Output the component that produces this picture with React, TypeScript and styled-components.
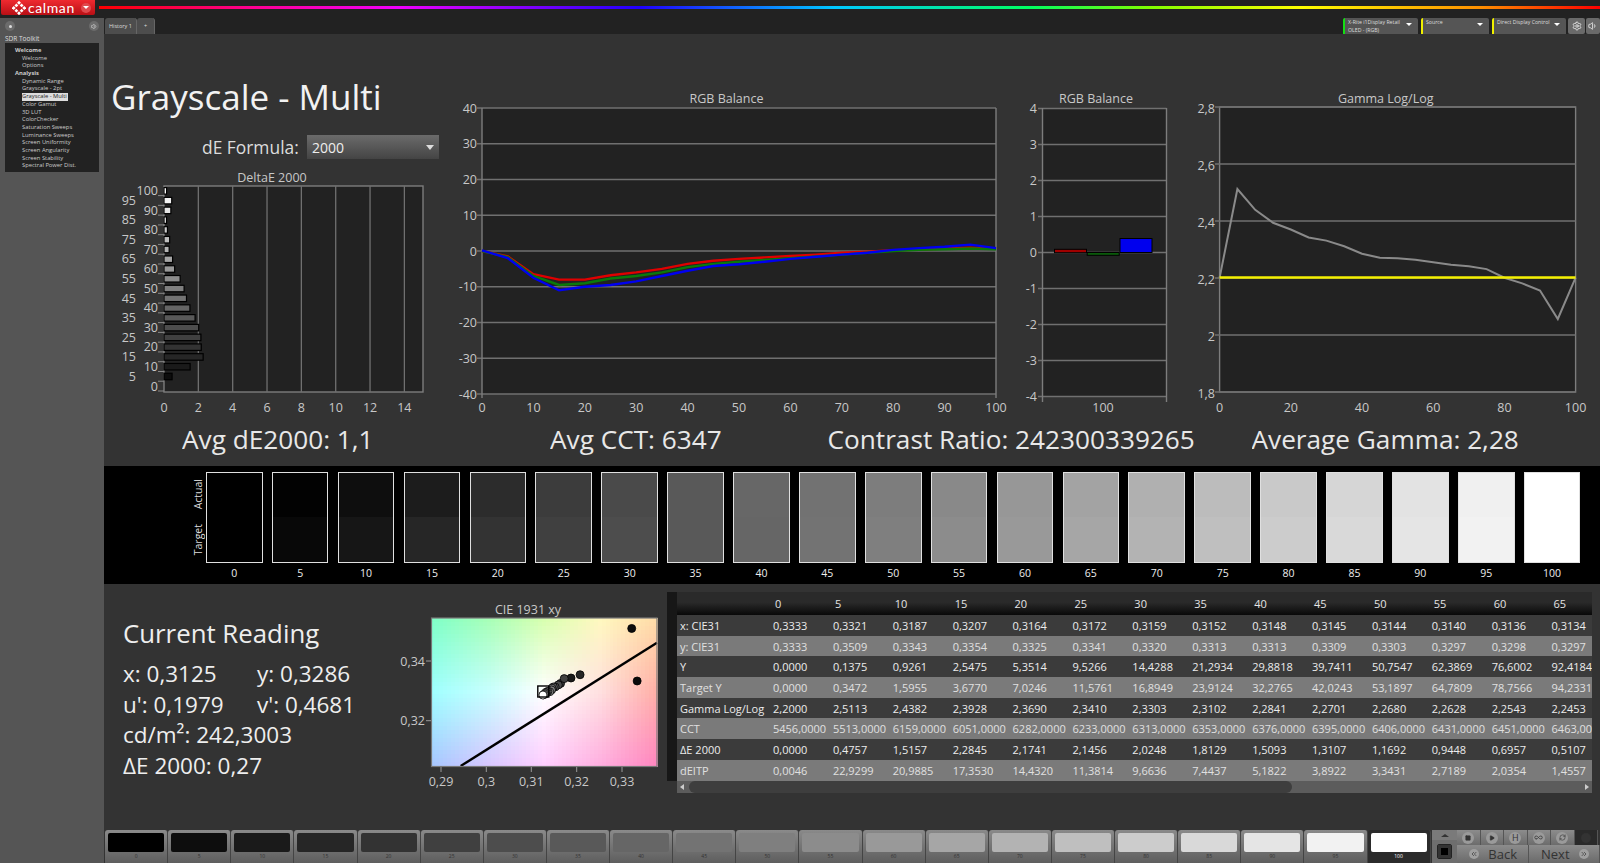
import { ReactNode } from 'react';
import styled, { createGlobalStyle } from 'styled-components';
import { ChevronsLeft, ChevronsRight, Infinity as InfinityIcon, Play, RefreshCw, Settings, Square, Volume1 } from 'lucide-react';

const FONT = '"Open Sans", "Noto Sans", sans-serif';

const GlobalStyle = createGlobalStyle`
  html, body {
    margin: 0;
    padding: 0;
    background: #333;
    font-family: ${FONT};
  }
`;

const Page = styled.div`
  width: 1600px;
  height: 863px;
  overflow: hidden;
  display: flex;
  flex-direction: column;
  background: #333;
  color: #eee;
`;

/* top strip */
const TopBar = styled.header`
  height: 18px;
  display: flex;
  background: #222;
`;

const LogoButton = styled.div`
  width: 94px;
  height: 15px;
  margin-left: 1px;
  display: flex;
  align-items: center;
  gap: 2px;
  padding: 0 4px 0 11px;
  box-sizing: border-box;
  border-radius: 0 0 2px 2px;
  background: linear-gradient(#ee2a30, #b90f15);
`;

const LogoText = styled.span`
  font-family: Lato, ${FONT};
  font-size: 14px;
  line-height: 15px;
  letter-spacing: 0.6px;
  color: #fff;
  margin-right: auto;
`;

const Caret = styled.i<{ $bg?: string; $size?: number }>`
  width: ${(p) => p.$size || 11}px;
  height: ${(p) => p.$size || 11}px;
  flex: none;
  display: flex;
  align-items: center;
  justify-content: center;
  border-radius: 50%;
  background: ${(p) => p.$bg || '#555'};

  &::after {
    content: '';
    border-top: 3px solid #fff;
    border-left: 3px solid transparent;
    border-right: 3px solid transparent;
  }
`;

const Rainbow = styled.div`
  flex: 1;
  height: 3px;
  margin: 6px 0 0 4px;
  background: linear-gradient(
    90deg,
    #ff0000 0%,
    #ff0090 10%,
    #f000ff 20%,
    #2000ff 36%,
    #00c8ff 49%,
    #00ff60 62%,
    #80ff00 70%,
    #ffff00 80%,
    #ff9000 92%,
    #ff0000 100%
  );
`;

const Body = styled.div`
  flex: 1;
  display: flex;
  min-height: 0;
`;

/* left panel */
const Sidebar = styled.aside`
  width: 104px;
  flex: none;
  padding: 0 5px;
  box-sizing: border-box;
  background: #555;
  color: #ddd;
`;

const SideTools = styled.div`
  height: 16px;
  display: flex;
  align-items: center;
  justify-content: space-between;
  padding: 0 0 0 0;
`;

const RoundButton = styled.span<{ $size?: number; $bg?: string }>`
  width: ${(p) => p.$size || 10}px;
  height: ${(p) => p.$size || 10}px;
  flex: none;
  display: flex;
  align-items: center;
  justify-content: center;
  border-radius: 50%;
  color: #ddd;
  background: ${(p) => p.$bg || '#6c6c6c'};
`;

const ToolDot = styled.i`
  width: 3px;
  height: 3px;
  border-radius: 50%;
  background: #ddd;
`;

const SideTitle = styled.div`
  font-size: 6.5px;
  line-height: 9px;
`;

const Tree = styled.ul`
  list-style: none;
  margin: 0;
  padding: 4px 0 0 10px;
  width: 94px;
  height: 129px;
  box-sizing: border-box;
  background: #222;
`;

const TreeItem = styled.li<{ $bold?: boolean; $active?: boolean }>`
  height: 7.7px;
  line-height: 7.7px;
  width: fit-content;
  font-size: 5.8px;
  white-space: nowrap;
  margin-left: ${(p) => (p.$bold ? 0 : 7)}px;
  font-weight: ${(p) => (p.$bold ? 700 : 400)};
  color: ${(p) => (p.$active ? '#222' : '#ccc')};
  background: ${(p) => (p.$active ? '#ddd' : 'none')};
  padding-right: ${(p) => (p.$active ? 1 : 0)}px;
`;

/* main area */
const Content = styled.main`
  flex: 1;
  min-width: 0;
  display: flex;
  flex-direction: column;
`;

const TabBar = styled.div`
  height: 16px;
  display: flex;
  background: #222;
`;

const Tab = styled.div<{ $wide?: boolean }>`
  width: ${(p) => (p.$wide ? 31 : 17)}px;
  margin-left: ${(p) => (p.$wide ? 1 : 0)}px;
  display: flex;
  align-items: center;
  justify-content: center;
  font-size: 5.5px;
  color: #ddd;
  background: #4d4d4d;
  border-radius: 3px 3px 0 0;
  border-right: 1px solid #666;
`;

const DeviceChips = styled.div`
  margin-left: auto;
  display: flex;
  gap: 3px;
`;

const Chip = styled.div<{ $width: number; $color: string }>`
  width: ${(p) => p.$width}px;
  display: flex;
  justify-content: space-between;
  padding: 1px 4px 0 3px;
  box-sizing: border-box;
  background: #555;
  border-left: 2px solid ${(p) => p.$color};
  border-radius: 2px 2px 0 0;
  font-size: 5.2px;
  line-height: 7.5px;
  color: #ddd;
`;

const ChipIcons = styled.div`
  margin-left: -1px;
  display: flex;
  gap: 1px;
`;

const ChipIcon = styled.div<{ $width: number }>`
  width: ${(p) => p.$width}px;
  display: flex;
  align-items: center;
  justify-content: center;
  background: #6a6a6a;
  border-radius: 2px;
  color: #eee;
`;

const ChartRow = styled.section`
  height: 386px;
  display: flex;
  align-items: flex-start;
`;

const LeftColumn = styled.div`
  width: 340px;
  flex: none;
`;

const PlotGroup = styled.div`
  padding-top: 56px;
  display: flex;
`;

const PageTitle = styled.h1`
  margin: 0;
  padding: 39px 0 0 7px;
  font-size: 35px;
  line-height: 48px;
  font-weight: 400;
  color: #f2f2f2;
`;

const FormulaRow = styled.div`
  display: flex;
  align-items: center;
  justify-content: space-between;
  width: 237px;
  margin: 14px 0 1px 98px;
  height: 24px;
  font-size: 17.4px;
  color: #ddd;
`;

const FormulaSelect = styled.div`
  width: 132px;
  height: 24px;
  display: flex;
  align-items: center;
  justify-content: space-between;
  padding: 0 5px;
  box-sizing: border-box;
  background: linear-gradient(#6b6b6b, #444);
  font-size: 14px;
  color: #eee;

  &::after {
    content: '';
    border-top: 5px solid #ddd;
    border-left: 4px solid transparent;
    border-right: 4px solid transparent;
  }
`;

const ChartSvg = styled.svg<{ $top?: number }>`
  display: block;
  flex: none;
  margin-top: ${(p) => p.$top || 0}px;
  font-family: ${FONT};

  text {
    fill: #c8c8c8;
    font-size: 12.5px;
  }
`;

const StatsRow = styled.section`
  height: 46px;
  padding-bottom: 8px;
  box-sizing: border-box;
  display: flex;
  align-items: center;
  font-size: 26.2px;
  color: #e8e8e8;
`;

const Stat = styled.div<{ $left: number; $width: number }>`
  margin-left: ${(p) => p.$left}px;
  width: ${(p) => p.$width}px;
  overflow: hidden;
  white-space: nowrap;
  flex: none;
`;

/* swatch band */
const SwatchBand = styled.section`
  height: 118px;
  display: flex;
  align-items: flex-start;
  padding: 6px 0 0 88px;
  box-sizing: border-box;
  background: #000;
`;

const SideLabels = styled.div`
  width: 14px;
  height: 91px;
  display: flex;
  flex-direction: column;
  justify-content: space-around;
  align-items: flex-start;
`;

const VerticalLabel = styled.span`
  writing-mode: vertical-rl;
  transform: rotate(180deg);
  font-size: 10.5px;
  line-height: 12px;
  color: #ddd;
`;

const SwatchList = styled.div`
  display: flex;
  gap: 9.3px;
`;

const SwatchCell = styled.div`
  width: 56.6px;
  display: flex;
  flex-direction: column;
  align-items: center;
`;

const SwatchBox = styled.div<{ $actual: string; $target: string }>`
  width: 100%;
  height: 91px;
  box-sizing: border-box;
  border: 1.5px solid #e0e0e0;
  background: linear-gradient(${(p) => p.$actual} 50%, ${(p) => p.$target} 50%);
`;

const SwatchLabel = styled.span`
  margin-top: 3px;
  font-size: 10.5px;
  line-height: 14px;
  color: #eee;
`;

/* lower area */
const LowerRow = styled.section`
  height: 246px;
  display: flex;
  align-items: flex-start;
`;

const Reading = styled.div`
  width: 296px;
  flex: none;
  padding: 34px 0 0 19px;
  box-sizing: border-box;
  color: #eee;
`;

const ReadingTitle = styled.h2`
  margin: 0 0 10px;
  font-size: 25.8px;
  line-height: 31px;
  font-weight: 400;
`;

const ReadingLine = styled.div`
  display: flex;
  font-size: 22.5px;
  line-height: 30.6px;
`;

const ReadingCell = styled.span`
  width: 134px;
`;

const TableWrap = styled.div`
  width: 925px;
  margin-top: 8px;
  flex: none;
`;

const TableClip = styled.div`
  overflow: hidden;
  border-left: 10px solid #171717;
`;

const DataTable = styled.table`
  border-collapse: collapse;
  table-layout: fixed;
  width: 934.6px;
  font-size: 11px;
`;

const HeaderRow = styled.tr`
  height: 23px;
  background: linear-gradient(#2a2a2a 45%, #080808);
  color: #e4e4e4;
`;

const DataRow = styled.tr<{ $light: boolean }>`
  height: 20.7px;
  background: ${(p) => (p.$light ? '#7a7a7a' : '#3b3b3b')};
  color: ${(p) => (p.$light ? '#e0e0e0' : '#ececec')};
`;

const Cell = styled.td<{ $first?: boolean; $head?: boolean }>`
  width: ${(p) => (p.$first ? 96 : 59.9)}px;
  padding: 0 0 0 ${(p) => (p.$first ? 3 : p.$head ? 2 : 0)}px;
  box-sizing: border-box;
  white-space: nowrap;
  overflow: visible;
`;

const ScrollBar = styled.div`
  height: 12px;
  margin-left: 10px;
  display: flex;
  align-items: stretch;
  background: #5c5c5c;
`;

const ScrollArrow = styled.span<{ $right?: boolean }>`
  width: 10px;
  flex: none;
  display: flex;
  align-items: center;
  justify-content: center;
  background: #5c5c5c;
  margin-left: ${(p) => (p.$right ? 'auto' : 0)};

  &::after {
    content: '';
    border-top: 3px solid transparent;
    border-bottom: 3px solid transparent;
    ${(p) => (p.$right ? 'border-left: 4px solid #ccc;' : 'border-right: 4px solid #ccc;')}
  }
`;

const ScrollThumb = styled.span`
  width: 603px;
  margin-left: 2px;
  border-radius: 6px;
  background: #3e3e3e;
`;

/* bottom strip */
const BottomBar = styled.footer`
  height: 33px;
  display: flex;
  padding-left: 1px;
`;

const PatchList = styled.div`
  display: flex;
  width: 1326px;
  flex: none;
`;

const Patch = styled.div<{ $active: boolean }>`
  width: 63.14px;
  flex: none;
  box-sizing: border-box;
  padding: 2.5px 3px 0;
  border-right: 1px solid #444;
  border-radius: 3px 3px 0 0;
  background: ${(p) => (p.$active ? '#2b2b2b' : 'linear-gradient(#8a8a8a, #5e5e5e)')};
  color: ${(p) => (p.$active ? '#fff' : '#333')};
  text-align: center;
`;

const PatchColor = styled.div<{ $gray: number }>`
  height: 19px;
  border-radius: 2px;
  background: rgb(${(p) => p.$gray}, ${(p) => p.$gray}, ${(p) => p.$gray});
`;

const PatchLabel = styled.div`
  font-size: 5px;
  line-height: 9px;
`;

const StackColumn = styled.div`
  width: 25px;
  margin-left: 1px;
  flex: none;
  display: flex;
  flex-direction: column;
  background: #6e6e6e;
`;

const StackUp = styled.div`
  height: 10px;
  display: flex;
  align-items: center;
  justify-content: center;
  background: #7a7a7a;

  &::after {
    content: '';
    border-bottom: 3px solid #333;
    border-left: 4px solid transparent;
    border-right: 4px solid transparent;
  }
`;

const StackStop = styled.div`
  flex: 1;
  display: flex;
  align-items: center;
  justify-content: center;

  &::after {
    content: '';
    width: 7px;
    height: 7px;
    background: #000;
    border: 3px solid #333;
    outline: 1px solid #222;
    border-radius: 1px;
  }
`;

const ControlColumn = styled.div`
  flex: 1;
  display: flex;
  flex-direction: column;
`;

const ControlRow = styled.div`
  height: 16px;
  display: flex;
`;

const IconButton = styled.div<{ $dark?: boolean }>`
  width: 23.5px;
  flex: none;
  display: flex;
  align-items: center;
  justify-content: center;
  border-right: 1px solid #555;
  box-sizing: border-box;
  background: ${(p) => (p.$dark ? '#2a2a2a' : 'linear-gradient(#8c8c8c, #6c6c6c)')};
  color: #333;
`;

const LetterIcon = styled.span`
  font-size: 9px;
  line-height: 12px;
  color: #333;
`;

const NavRow = styled.div`
  flex: 1;
  display: flex;
`;

const NavButton = styled.div`
  flex: 1;
  display: flex;
  align-items: center;
  justify-content: space-around;
  padding: 0 6px 0 8px;
  background: linear-gradient(#8c8c8c, #6a6a6a);
  border-right: 1px solid #555;
  font-size: 13px;
  color: #333;
`;

interface AxisProps {
  x: number;
  y: number;
  anchor?: 'end' | 'middle' | 'start';
  children: ReactNode;
}

const Label = ({ x, y, anchor = 'middle', children }: AxisProps): JSX.Element => (
  <text x={x} y={y} textAnchor={anchor} dominantBaseline="central">
    {children}
  </text>
);

const STEPS = Array.from({ length: 21 }, (_, i) => i * 5);

// swatch greys, top half measured / bottom half target
const ACTUAL = [0, 2, 14, 28, 44, 60, 74, 89, 103, 114, 125, 137, 151, 163, 176, 188, 201, 214, 227, 240, 255];
const TARGET = STEPS.map((p) => Math.round(p * 2.55));
const SWATCH_TARGET = STEPS.map((p, i) => (p === 5 ? 8 : p === 10 ? 22 : TARGET[i]));

const DELTA = [0, 0.47, 1.52, 2.28, 2.17, 2.15, 2.02, 1.81, 1.51, 1.31, 1.17, 0.94, 0.62, 0.5, 0.3, 0.33, 0.2, 0.15, 0.4, 0.45, 0.15];

const RED = [0, -1.5, -6.5, -8, -8, -6.8, -6, -5, -3.6, -2.7, -2.2, -1.8, -1.4, -1, -0.5, -0.2, 0.2, 0.4, 0.7, 0.9, 0.6];
const GREEN = [0, -1.7, -7, -9.5, -9, -7.7, -7, -6, -4.5, -3.6, -3, -2.5, -2, -1.5, -1, -0.5, 0, 0.3, 0.5, 0.7, 0.5];
const BLUE = [0.2, -2, -7.5, -11, -10, -9.5, -8.5, -7, -5.5, -4.2, -3.7, -3, -2.2, -1.6, -1, -0.5, 0.3, 0.8, 1.2, 1.8, 0.8];

const GAMMA = [2.2, 2.5113, 2.4382, 2.3928, 2.369, 2.341, 2.3303, 2.3102, 2.2841, 2.2701, 2.268, 2.2628, 2.2543, 2.2453, 2.24, 2.23, 2.2, 2.18, 2.155, 2.055, 2.2];

const CIE_X = [0.3333, 0.3321, 0.3187, 0.3207, 0.3164, 0.3172, 0.3159, 0.3152, 0.3148, 0.3145, 0.3144, 0.314, 0.3136, 0.3134, 0.3132, 0.3131, 0.313, 0.3129, 0.3128, 0.3126, 0.3125];
const CIE_Y = [0.3333, 0.3509, 0.3343, 0.3354, 0.3325, 0.3341, 0.332, 0.3313, 0.3313, 0.3309, 0.3303, 0.3297, 0.3298, 0.3297, 0.3295, 0.3293, 0.3291, 0.329, 0.3288, 0.3287, 0.3286];

const polyline = (values: number[], toY: (v: number) => number, left: number, step: number): string =>
  values.map((v, i) => `${(left + i * step).toFixed(1)},${toY(v).toFixed(1)}`).join(' ');

function DeltaChart(): JSX.Element {
  const left = 164;
  const unit = 17.17;
  const rowY = (i: number) => 386 - i * 9.77;
  return (
    <ChartSvg width={340} height={262} viewBox="104 160 340 262">
      <Label x={272} y={177}>DeltaE 2000</Label>
      <rect x={left} y={186} width={259} height={206} fill="#222" stroke="#7d7d7d" strokeWidth={1.4} />
      {[2, 4, 6, 8, 10, 12, 14].map((v) => (
        <line key={v} x1={left + v * unit} x2={left + v * unit} y1={186} y2={392} stroke="#707070" strokeWidth={1.3} />
      ))}
      {STEPS.map((p, i) => (
        <g key={p}>
          <line x1={158} x2={164} y1={rowY(i) + 5} y2={rowY(i) + 5} stroke="#888" />
          {p % 10 === 0 ? (
            <Label x={158} y={rowY(i)} anchor="end">{p}</Label>
          ) : (
            <Label x={136} y={rowY(i)} anchor="end">{p}</Label>
          )}
          {DELTA[i] > 0 && (
            <rect
              x={left}
              y={rowY(i) - 3}
              width={DELTA[i] * unit}
              height={6.5}
              fill={`rgb(${TARGET[i]},${TARGET[i]},${TARGET[i]})`}
              stroke="#000"
              strokeWidth={1.2}
            />
          )}
        </g>
      ))}
      {[0, 2, 4, 6, 8, 10, 12, 14].map((v) => (
        <Label key={v} x={left + v * unit} y={407}>{v}</Label>
      ))}
    </ChartSvg>
  );
}

function BalanceChart(): JSX.Element {
  const toY = (v: number) => 251 - v * 3.575;
  return (
    <ChartSvg width={566} height={330} viewBox="444 90 566 330">
      <Label x={726.5} y={98}>RGB Balance</Label>
      <rect x={482} y={108} width={514} height={286} fill="#222" />
      {[40, 30, 20, 10, 0, -10, -20, -30, -40].map((v) => (
        <g key={v}>
          <line x1={477} x2={996} y1={toY(v)} y2={toY(v)} stroke="#707070" strokeWidth={1.3} />
          <Label x={477} y={toY(v)} anchor="end">{v}</Label>
        </g>
      ))}
      <line x1={482} x2={482} y1={108} y2={398} stroke="#7d7d7d" strokeWidth={1.4} />
      <line x1={996} x2={996} y1={108} y2={398} stroke="#7d7d7d" strokeWidth={1.4} />
      {[0, 10, 20, 30, 40, 50, 60, 70, 80, 90, 100].map((v) => (
        <Label key={v} x={482 + v * 5.14} y={407}>{v}</Label>
      ))}
      <polyline points={polyline(RED, toY, 482, 25.7)} fill="none" stroke="#e00000" strokeWidth={2.4} />
      <polyline points={polyline(GREEN, toY, 482, 25.7)} fill="none" stroke="#0a7a0a" strokeWidth={2.4} />
      <polyline points={polyline(BLUE, toY, 482, 25.7)} fill="none" stroke="#0000f0" strokeWidth={2.4} />
    </ChartSvg>
  );
}

function SmallBalanceChart(): JSX.Element {
  const rows = [4, 3, 2, 1, 0, -1, -2, -3, -4];
  const toY = (v: number) => 252.5 - v * 36;
  return (
    <ChartSvg width={180} height={330} viewBox="1010 90 180 330">
      <Label x={1096} y={98}>RGB Balance</Label>
      <rect x={1042.5} y={108} width={124} height={289} fill="#222" />
      {rows.map((v) => (
        <g key={v}>
          <line x1={1038} x2={1166.5} y1={toY(v)} y2={toY(v)} stroke="#707070" strokeWidth={1.3} />
          <Label x={1037} y={toY(v)} anchor="end">{v}</Label>
        </g>
      ))}
      <line x1={1042.5} x2={1042.5} y1={108} y2={402} stroke="#7d7d7d" strokeWidth={1.4} />
      <line x1={1166.5} x2={1166.5} y1={108} y2={402} stroke="#7d7d7d" strokeWidth={1.4} />
      <rect x={1054.5} y={249.3} width={32} height={3.4} fill="#a00000" stroke="#000" />
      <rect x={1087.2} y={252.5} width={32} height={2.8} fill="#0a5a0a" stroke="#000" />
      <rect x={1120} y={238.5} width={32} height={14} fill="#0000ee" stroke="#000" />
      <Label x={1103} y={407}>100</Label>
    </ChartSvg>
  );
}

function GammaChart(): JSX.Element {
  const toY = (v: number) => 391.7 - (v - 1.8) * 285;
  const labels = ['2,8', '2,6', '2,4', '2,2', '2', '1,8'];
  return (
    <ChartSvg width={410} height={330} viewBox="1190 90 410 330">
      <Label x={1385.7} y={98}>Gamma Log/Log</Label>
      <rect x={1219.6} y={107} width={356} height={285} fill="#222" stroke="#7d7d7d" strokeWidth={1.4} />
      {labels.map((text, i) => {
        const y = 107 + (i * 285) / 5;
        return (
          <g key={text}>
            <line x1={1215} x2={1575.6} y1={y} y2={y} stroke="#707070" strokeWidth={1.3} />
            <Label x={1215} y={y + 1} anchor="end">{text}</Label>
          </g>
        );
      })}
      {[0, 20, 40, 60, 80, 100].map((v) => (
        <Label key={v} x={1219.6 + v * 3.56} y={407}>{v}</Label>
      ))}
      <polyline points={polyline(GAMMA, toY, 1219.6, 17.8)} fill="none" stroke="#8a8a8a" strokeWidth={2} />
      <line x1={1219.6} x2={1575.6} y1={277.5} y2={277.5} stroke="#f4f000" strokeWidth={2.4} />
    </ChartSvg>
  );
}

const CIE_COLORS = [
  ['#80ffc8', '#a8ffb8', '#d8ffb0', '#fff8c0', '#ffdca8'],
  ['#a0ffff', '#c8ffff', '#ffffff', '#ffe0e0', '#ffb0a8'],
  ['#a8c8ff', '#d8c8ff', '#ffd0ff', '#ffb0e0', '#ff88c0'],
];

const hexToRgb = (hex: string): number[] => [1, 3, 5].map((i) => parseInt(hex.slice(i, i + 2), 16));

// bilinear blend over the control colours above
const cieColor = (u: number, v: number): string => {
  const cx = u * 4;
  const cy = v * 2;
  const ix = Math.min(Math.floor(cx), 3);
  const iy = Math.min(Math.floor(cy), 1);
  const fx = cx - ix;
  const fy = cy - iy;
  const a = hexToRgb(CIE_COLORS[iy][ix]);
  const b = hexToRgb(CIE_COLORS[iy][ix + 1]);
  const c = hexToRgb(CIE_COLORS[iy + 1][ix]);
  const d = hexToRgb(CIE_COLORS[iy + 1][ix + 1]);
  const mix = a.map((_, k) => Math.round(a[k] * (1 - fx) * (1 - fy) + b[k] * fx * (1 - fy) + c[k] * (1 - fx) * fy + d[k] * fx * fy));
  return `rgb(${mix.join(',')})`;
};

function CieChart(): JSX.Element {
  const left = 431.5;
  const top = 618;
  const cols = 57;
  const rows = 37;
  const cellW = 225.5 / cols;
  const cellH = 148.5 / rows;
  const px = (x: number) => 486.3 + (x - 0.3) * 4530;
  const py = (y: number) => 661 - (y - 0.34) * 2985;
  const cells = [];
  for (let r = 0; r < rows; r++) {
    for (let c = 0; c < cols; c++) {
      cells.push(
        <rect
          key={`${r}-${c}`}
          x={left + c * cellW}
          y={top + r * cellH}
          width={cellW + 0.6}
          height={cellH + 0.6}
          fill={cieColor(c / (cols - 1), r / (rows - 1))}
        />
      );
    }
  }
  return (
    <ChartSvg $top={6} width={267} height={210} viewBox="400 590 267 210">
      <Label x={528} y={609}>CIE 1931 xy</Label>
      <g shapeRendering="crispEdges">{cells}</g>
      <line x1={460.7} y1={766} x2={657} y2={642.7} stroke="#000" strokeWidth={2.4} />
      {STEPS.map((p, i) => (
        <circle
          key={p}
          cx={px(CIE_X[i])}
          cy={py(CIE_Y[i])}
          r={4}
          fill={`rgb(${Math.max(TARGET[i], 10)},${Math.max(TARGET[i], 10)},${Math.max(TARGET[i], 10)})`}
          stroke="#000"
          strokeWidth={0.8}
        />
      ))}
      <rect x={537.8} y={686} width={11} height={11} fill="none" stroke="#000" strokeWidth={1.4} />
      <rect x={left} y={top} width={225.5} height={148.5} fill="none" stroke="#777" strokeWidth={1.2} />
      {[
        ['0,29', 441],
        ['0,3', 486.3],
        ['0,31', 531.3],
        ['0,32', 576.7],
        ['0,33', 622],
      ].map(([text, x]) => (
        <g key={text}>
          <line x1={x} x2={x} y1={767} y2={772} stroke="#999" />
          <Label x={x as number} y={781}>{text}</Label>
        </g>
      ))}
      {[
        ['0,34', 661],
        ['0,32', 720.7],
      ].map(([text, y]) => (
        <g key={text}>
          <line x1={426} x2={431} y1={y} y2={y} stroke="#999" />
          <Label x={425} y={y as number} anchor="end">{text}</Label>
        </g>
      ))}
    </ChartSvg>
  );
}

const COLUMNS = [0, 5, 10, 15, 20, 25, 30, 35, 40, 45, 50, 55, 60, 65];

const ROWS: [string, string[]][] = [
  ['x: CIE31', ['0,3333', '0,3321', '0,3187', '0,3207', '0,3164', '0,3172', '0,3159', '0,3152', '0,3148', '0,3145', '0,3144', '0,3140', '0,3136', '0,3134']],
  ['y: CIE31', ['0,3333', '0,3509', '0,3343', '0,3354', '0,3325', '0,3341', '0,3320', '0,3313', '0,3313', '0,3309', '0,3303', '0,3297', '0,3298', '0,3297']],
  ['Y', ['0,0000', '0,1375', '0,9261', '2,5475', '5,3514', '9,5266', '14,4288', '21,2934', '29,8818', '39,7411', '50,7547', '62,3869', '76,6002', '92,4184']],
  ['Target Y', ['0,0000', '0,3472', '1,5955', '3,6770', '7,0246', '11,5761', '16,8949', '23,9124', '32,2765', '42,0243', '53,1897', '64,7809', '78,7566', '94,2331']],
  ['Gamma Log/Log', ['2,2000', '2,5113', '2,4382', '2,3928', '2,3690', '2,3410', '2,3303', '2,3102', '2,2841', '2,2701', '2,2680', '2,2628', '2,2543', '2,2453']],
  ['CCT', ['5456,0000', '5513,0000', '6159,0000', '6051,0000', '6282,0000', '6233,0000', '6313,0000', '6353,0000', '6376,0000', '6395,0000', '6406,0000', '6431,0000', '6451,0000', '6463,0000']],
  ['ΔE 2000', ['0,0000', '0,4757', '1,5157', '2,2845', '2,1741', '2,1456', '2,0248', '1,8129', '1,5093', '1,3107', '1,1692', '0,9448', '0,6957', '0,5107']],
  ['dEITP', ['0,0046', '22,9299', '20,9885', '17,3530', '14,4320', '11,3814', '9,6636', '7,4437', '5,1822', '3,8922', '3,3431', '2,7189', '2,0354', '1,4557']],
];

const TREE = [
  { text: 'Welcome', bold: true },
  { text: 'Welcome' },
  { text: 'Options' },
  { text: 'Analysis', bold: true },
  { text: 'Dynamic Range' },
  { text: 'Grayscale - 2pt' },
  { text: 'Grayscale - Multi', active: true },
  { text: 'Color Gamut' },
  { text: '3D LUT' },
  { text: 'ColorChecker' },
  { text: 'Saturation Sweeps' },
  { text: 'Luminance Sweeps' },
  { text: 'Screen Uniformity' },
  { text: 'Screen Angularity' },
  { text: 'Screen Stability' },
  { text: 'Spectral Power Dist.' },
];

function LogoMark(): JSX.Element {
  const dots = [
    [8, 2],
    [5, 5],
    [11, 5],
    [2, 8],
    [14, 8],
    [5, 11],
    [11, 11],
    [8, 14],
  ];
  return (
    <svg width={14} height={14} viewBox="0 0 16 16">
      {dots.map(([x, y]) => (
        <polygon key={`${x}-${y}`} points={`${x},${y - 2.2} ${x + 2.2},${y} ${x},${y + 2.2} ${x - 2.2},${y}`} fill="#fff" />
      ))}
    </svg>
  );
}

export default function App(): JSX.Element {
  return (
    <Page>
      <GlobalStyle />
      <TopBar>
        <LogoButton>
          <LogoMark />
          <LogoText>calman</LogoText>
          <Caret $bg="#e0494d" $size={10} />
        </LogoButton>
        <Rainbow />
      </TopBar>
      <Body>
        <Sidebar>
          <SideTools>
            <RoundButton><ToolDot /></RoundButton>
            <RoundButton><Volume1 size={7} /></RoundButton>
          </SideTools>
          <SideTitle>SDR Toolkit</SideTitle>
          <Tree>
            {TREE.map((item, i) => (
              <TreeItem key={`${item.text}-${i}`} $bold={item.bold} $active={item.active}>
                {item.text}
              </TreeItem>
            ))}
          </Tree>
        </Sidebar>
        <Content>
          <TabBar>
            <Tab $wide>History 1</Tab>
            <Tab>+</Tab>
            <DeviceChips>
              <Chip $width={75} $color="#14e014">
                <span>X-Rite i1Display Retail<br />OLED - (RGB)</span>
                <Caret />
              </Chip>
              <Chip $width={68} $color="#f0f000">
                <span>Source</span>
                <Caret />
              </Chip>
              <Chip $width={74} $color="#f0f000">
                <span>Direct Display Control</span>
                <Caret />
              </Chip>
              <ChipIcons>
                <ChipIcon $width={17}><Settings size={10} /></ChipIcon>
                <ChipIcon $width={14}><Volume1 size={10} /></ChipIcon>
              </ChipIcons>
            </DeviceChips>
          </TabBar>
          <ChartRow>
            <LeftColumn>
              <PageTitle>Grayscale - Multi</PageTitle>
              <FormulaRow>
                dE Formula:
                <FormulaSelect>2000</FormulaSelect>
              </FormulaRow>
              <DeltaChart />
            </LeftColumn>
            <PlotGroup>
              <BalanceChart />
              <SmallBalanceChart />
              <GammaChart />
            </PlotGroup>
          </ChartRow>
          <StatsRow>
            <Stat $left={78} $width={368}>Avg dE2000: 1,1</Stat>
            <Stat $left={0} $width={277.5}>Avg CCT: 6347</Stat>
            <Stat $left={0} $width={366}>Contrast Ratio: 242300339265</Stat>
            <Stat $left={58} $width={300}>Average Gamma: 2,28</Stat>
          </StatsRow>
          <SwatchBand>
            <SideLabels>
              <VerticalLabel>Actual</VerticalLabel>
              <VerticalLabel>Target</VerticalLabel>
            </SideLabels>
            <SwatchList>
              {STEPS.map((p, i) => (
                <SwatchCell key={p}>
                  <SwatchBox
                    $actual={`rgb(${ACTUAL[i]},${ACTUAL[i]},${ACTUAL[i]})`}
                    $target={`rgb(${SWATCH_TARGET[i]},${SWATCH_TARGET[i]},${SWATCH_TARGET[i]})`}
                  />
                  <SwatchLabel>{p}</SwatchLabel>
                </SwatchCell>
              ))}
            </SwatchList>
          </SwatchBand>
          <LowerRow>
            <Reading>
              <ReadingTitle>Current Reading</ReadingTitle>
              <ReadingLine>
                <ReadingCell>x: 0,3125</ReadingCell>
                <span>y: 0,3286</span>
              </ReadingLine>
              <ReadingLine>
                <ReadingCell>u': 0,1979</ReadingCell>
                <span>v': 0,4681</span>
              </ReadingLine>
              <ReadingLine>cd/m²: 242,3003</ReadingLine>
              <ReadingLine>ΔE 2000: 0,27</ReadingLine>
            </Reading>
            <CieChart />
            <TableWrap>
              <TableClip>
                <DataTable>
                  <tbody>
                    <HeaderRow>
                      <Cell $first />
                      {COLUMNS.map((c) => (
                        <Cell key={c} $head>{c}</Cell>
                      ))}
                    </HeaderRow>
                    {ROWS.map(([label, values], i) => (
                      <DataRow key={label} $light={i % 2 === 1}>
                        <Cell $first>{label}</Cell>
                        {values.map((v, k) => (
                          <Cell key={k}>{v}</Cell>
                        ))}
                      </DataRow>
                    ))}
                  </tbody>
                </DataTable>
              </TableClip>
              <ScrollBar>
                <ScrollArrow />
                <ScrollThumb />
                <ScrollArrow $right />
              </ScrollBar>
            </TableWrap>
          </LowerRow>
          <BottomBar>
            <PatchList>
              {STEPS.map((p, i) => (
                <Patch key={p} $active={p === 100}>
                  <PatchColor $gray={TARGET[i]} />
                  <PatchLabel>{p}</PatchLabel>
                </Patch>
              ))}
            </PatchList>
            <StackColumn>
              <StackUp />
              <StackStop />
            </StackColumn>
            <ControlColumn>
              <ControlRow>
                <IconButton><RoundButton $size={12} $bg="#9a9a9a"><Square size={6} fill="#333" color="#333" /></RoundButton></IconButton>
                <IconButton><RoundButton $size={12} $bg="#9a9a9a"><Play size={6} fill="#333" color="#333" /></RoundButton></IconButton>
                <IconButton><RoundButton $size={12} $bg="#9a9a9a"><LetterIcon>H</LetterIcon></RoundButton></IconButton>
                <IconButton><RoundButton $size={12} $bg="#9a9a9a"><InfinityIcon size={9} color="#333" /></RoundButton></IconButton>
                <IconButton><RoundButton $size={12} $bg="#9a9a9a"><RefreshCw size={7} color="#333" /></RoundButton></IconButton>
                <IconButton $dark><RoundButton $size={10} $bg="#333" /></IconButton>
              </ControlRow>
              <NavRow>
                <NavButton>
                  <RoundButton $size={10} $bg="#a0a0a0"><ChevronsLeft size={8} color="#333" /></RoundButton>
                  Back
                </NavButton>
                <NavButton>
                  Next
                  <RoundButton $size={10} $bg="#a0a0a0"><ChevronsRight size={8} color="#333" /></RoundButton>
                </NavButton>
              </NavRow>
            </ControlColumn>
          </BottomBar>
        </Content>
      </Body>
    </Page>
  );
}
